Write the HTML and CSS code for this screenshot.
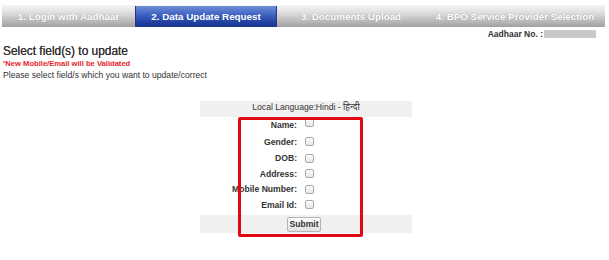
FILE: index.html
```html
<!DOCTYPE html>
<html>
<head>
<meta charset="utf-8">
<link rel="stylesheet" href="styles.css">
</head>
<body>
<div class="tabs">
  <div class="tab t1">1. Login with Aadhaar</div>
  <div class="tab t2 active">2. Data Update Request</div>
  <div class="tab t3">3. Documents Upload</div>
  <div class="tab t4">4. BPO Service Provider Selection</div>
</div>
<div class="aadhaar">
  <span class="aadhaar-label">Aadhaar No. :</span>
  <span class="aadhaar-mask"></span>
</div>
<div class="intro">
  <div class="heading">Select field(s) to update</div>
  <div class="warn"><span class="star">*</span>New Mobile/Email will be Validated</div>
  <div class="note">Please select field/s which you want to update/correct</div>
</div>
<div class="form">
  <div class="lang">Local Language:Hindi - <span class="hindi">हिन्दी</span></div>
  <div class="row r-name"><label class="lbl">Name:</label><input type="checkbox" class="cb"></div>
  <div class="row r-gender"><label class="lbl">Gender:</label><input type="checkbox" class="cb"></div>
  <div class="row r-dob"><label class="lbl">DOB:</label><input type="checkbox" class="cb"></div>
  <div class="row r-addr"><label class="lbl">Address:</label><input type="checkbox" class="cb"></div>
  <div class="row r-mob"><label class="lbl">Mobile Number:</label><input type="checkbox" class="cb"></div>
  <div class="row r-email"><label class="lbl">Email Id:</label><input type="checkbox" class="cb"></div>
  <div class="submit-row"><button class="btn">Submit</button></div>
  <div class="highlight"></div>
</div>
</body>
</html>
```
FILE: styles.css
```css
html, body {
  margin: 0;
  padding: 0;
  background: #fff;
}
body {
  width: 609px;
  height: 260px;
  overflow: hidden;
  font-family: "Liberation Sans", Arial, sans-serif;
  color: #333;
}
.tabs {
  display: flex;
  margin: 5px 0 0 2px;
  width: 603px;
  height: 22px;
  background: linear-gradient(#f4f4f4, #e2e2e2 30%, #b4b4b4 80%, #a0a0a0);
}
.tab {
  display: flex;
  align-items: center;
  justify-content: center;
  color: #fff;
  font-weight: bold;
  font-size: 9.8px;
  text-shadow: 0 0 1px rgba(0,0,0,0.3);
  box-sizing: border-box;
}
.t1 { width: 133px; }
.t2 { width: 142px; }
.t3 { width: 148px; }
.t4 { flex: 1; }
.tab.active {
  background: linear-gradient(#6f8fd8, #3c5fbf 45%, #1f3f9f 80%, #18358c);
  border-left: 1px solid #223a7a;
  border-right: 1px solid #223a7a;
  margin-top: 1px;
  text-shadow: none;
}
.aadhaar {
  display: flex;
  justify-content: flex-end;
  align-items: center;
  height: 9px;
  margin-top: 2px;
  padding-right: 13px;
}
.aadhaar-label {
  font-size: 8.5px;
  font-weight: bold;
  color: #333;
  margin-right: 1px;
}
.aadhaar-mask {
  width: 52px;
  height: 8px;
  background: #c9c9c9;
}
.intro {
  margin: 6px 0 0 3px;
}
.heading {
  font-size: 11.9px;
  line-height: 14px;
  color: #333;
  text-shadow: 0 0 0.3px #333;
}
.warn {
  font-size: 7.6px;
  font-weight: bold;
  color: #e5262b;
  line-height: 11px;
}
.star {
  font-size: 6px;
  vertical-align: 1px;
}
.note {
  font-size: 8.6px;
  line-height: 12px;
  color: #333;
}
.form {
  position: relative;
  width: 212px;
  margin: 20px 0 0 200px;
}
.lang {
  height: 16px;
  background: #f0f0f0;
  font-size: 8.6px;
  line-height: 12px;
  text-align: center;
  color: #333;
}
.hindi {
  font-family: "Noto Sans", "Liberation Sans", sans-serif;
  font-size: 8.8px;
}
.row {
  display: flex;
  align-items: center;
}
.r-name { height: 15px; }
.r-gender { height: 18px; padding-top: 1px; box-sizing: border-box; }
.r-dob { height: 16px; }
.r-addr { height: 15px; }
.r-mob { height: 16px; }
.r-email { height: 15px; }
.r-name .cb { margin-top: -4px; }
.lbl {
  width: 97px;
  text-align: right;
  font-size: 8.6px;
  font-weight: bold;
  color: #333;
}
.cb {
  appearance: none;
  -webkit-appearance: none;
  width: 9px;
  height: 9px;
  margin: 0 0 0 8px;
  border: 1px solid #a9a9a9;
  border-radius: 2px;
  background: linear-gradient(#fdfdfd, #e6e6e6);
  box-sizing: border-box;
}
.submit-row {
  margin-top: 3px;
  height: 18px;
  background: #f0f0f0;
  display: flex;
  align-items: center;
  justify-content: center;
}
.btn {
  width: 34px;
  height: 15px;
  padding: 0;
  margin-left: -4px;
  font-family: "Liberation Sans", Arial, sans-serif;
  font-size: 8.6px;
  font-weight: bold;
  color: #333;
  border: 1px solid #b5b5b5;
  border-radius: 2px;
  background: linear-gradient(#fcfcfc, #e2e2e2);
}
.highlight {
  position: absolute;
  left: 38px;
  top: 16px;
  width: 125px;
  height: 120px;
  border: 3px solid #e30613;
  border-radius: 2px;
  box-sizing: border-box;
  pointer-events: none;
}
```
